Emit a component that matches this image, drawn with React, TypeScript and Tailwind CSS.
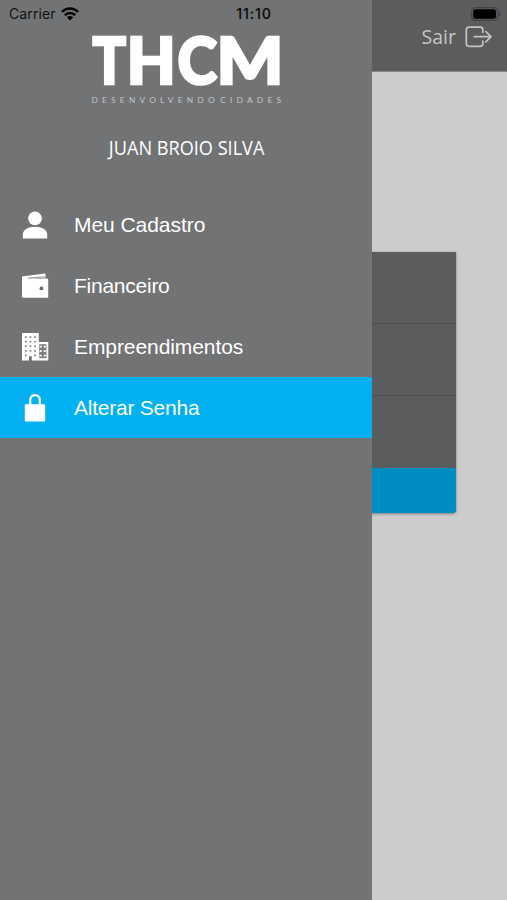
import React from 'react';

const UserIcon = () => (
  <svg width="26" height="28" viewBox="0 0 26 28" fill="#fff">
    <circle cx="13" cy="7.4" r="6.8" />
    <path d="M.8 27.4v-3.6C.8 18.9 5.6 15.8 13 15.8s12.2 3.1 12.2 8v3.6z" />
  </svg>
);

const WalletIcon = () => (
  <svg width="28" height="26" viewBox="0 0 28 26" fill="#fff">
    <path d="M1 3.6 23.6.6q.9 0 .9 1v3.2L6.8 5.6h19.4q1 0 1 1V24q0 .8-1 .8H2q-1 0-1-.8z" />
    <path d="M7 5.1 24.2 3.9" stroke="#727375" strokeWidth=".8" />
    <circle cx="20.4" cy="15.4" r="1.9" fill="#68696b" />
  </svg>
);

const BuildingIcon = () => (
  <svg width="28" height="28" viewBox="0 0 28 28">
    <path fill="#fff" d="M1 0h16.8v9H27.3v18.5H10.8v-4.2H8v4.2H1z" />
    <g fill="#7e7f81">
      {[3.3, 7.8, 12.3, 17].map((y) =>
        [4, 8.6, 13.2].map((x) => <rect key={`${x}-${y}`} x={x} y={y} width="1.7" height="1.7" />)
      )}
      <rect x="4" y="21.6" width="1.7" height="1.7" />
      <rect x="13.2" y="21.6" width="1.7" height="1.7" />
      <rect x="18.2" y="11.2" width="7.2" height="14" />
    </g>
    <g fill="#fff">
      {[12.7, 17.2, 21.7].map((y) =>
        [18.7, 22.7].map((x) => <rect key={`${x}-${y}`} x={x} y={y} width="2" height="1.8" />)
      )}
    </g>
  </svg>
);

const LockIcon = () => (
  <svg width="22" height="28" viewBox="0 0 22 28" fill="none">
    <rect x=".8" y="10.2" width="20.4" height="17.3" rx=".8" fill="#fff" />
    <path d="M6.2 11V6.6C6.2 3.4 8 1.2 11 1.2s4.8 2.2 4.8 5.4V11" stroke="#fff" strokeWidth="2.2" />
  </svg>
);

const ExitIcon = () => (
  <svg width="28" height="22" viewBox="0 0 28 22" fill="none" stroke="#c4c4c4" strokeWidth="1.7" strokeLinecap="round" strokeLinejoin="round">
    <path d="M17.8 6.3V3.6q0-2.5-2.5-2.5H4Q1.3 1.1 1.3 3.8v13.8q0 2.7 2.7 2.7h11.3q2.5 0 2.5-2.5v-2.6" />
    <path d="M9.3 10.7h16.5M20.8 5.5l5.2 5.2-5.2 5.2" />
  </svg>
);

const WifiIcon = () => (
  <svg width="18" height="14" viewBox="0 0 18 14" fill="none" stroke="#050505" strokeWidth="2.4">
    <path d="M.9 5C5.4.4 12.6.4 17.1 5" />
    <path d="M3.8 8.1c2.9-2.9 7.5-2.9 10.4 0" />
    <path d="M5.8 10.3c1.8-1.7 4.6-1.7 6.4 0L9 13.6z" fill="#050505" stroke="none" />
  </svg>
);

const BatteryIcon = () => (
  <svg width="30" height="14" viewBox="0 0 30 14">
    <rect x=".6" y=".6" width="26" height="12.8" rx="4" fill="none" stroke="#434446" strokeWidth="1.2" />
    <rect x="2.2" y="2.2" width="22.8" height="9.6" rx="2.4" fill="#000" />
    <path d="M27.8 4.6q1.8.6 1.8 2.4t-1.8 2.4z" fill="#434446" />
  </svg>
);

const Logo = () => (
  <svg width="194" height="74" viewBox="0 0 194 74" fill="#fff" className="overflow-visible font-['Lato','Liberation_Sans',sans-serif]">
    <g fontSize="64" fontWeight="900" stroke="#fff" strokeWidth="2.6">
      <text x="3.4" y="54" textLength="33.5" lengthAdjust="spacingAndGlyphs">T</text>
      <text x="37.8" y="54" textLength="49" lengthAdjust="spacingAndGlyphs">H</text>
      <text x="88.6" y="54" textLength="39.5" lengthAdjust="spacingAndGlyphs">C</text>
      <text x="127.6" y="54" textLength="67" lengthAdjust="spacingAndGlyphs">M</text>
    </g>
    <text x="2.5" y="72.5" fontSize="8.4" fill="#c3c4c5" textLength="189.5" lengthAdjust="spacing" wordSpacing="-5">
      DESENVOLVENDO CIDADES
    </text>
  </svg>
);

const menuItems = [
  { label: 'Meu Cadastro', tracking: 'tracking-[-0.05px]', icon: <UserIcon /> },
  { label: 'Financeiro', tracking: 'tracking-[-0.25px]', icon: <WalletIcon /> },
  { label: 'Empreendimentos', tracking: 'tracking-[-0.08px]', icon: <BuildingIcon /> },
  { label: 'Alterar Senha', tracking: 'tracking-[-0.23px]', icon: <LockIcon />, active: true },
];

const StatusBar = () => (
  <div className="absolute inset-x-0 top-0 z-20 flex h-[27px] items-center text-[#131314]">
    <div className="flex flex-1 items-center gap-[5px] pl-[9px] font-['Inter','Liberation_Sans',sans-serif] text-[14px] tracking-[0.1px]">
      <span>Carrier</span>
      <WifiIcon />
    </div>
    <span className="pr-[2px] font-['Inter','Liberation_Sans',sans-serif] text-[14px] leading-5 font-semibold tracking-[0.8px]">11:10</span>
    <div className="flex flex-1 justify-end pr-[6px]">
      <BatteryIcon />
    </div>
  </div>
);

const Drawer = () => (
  <aside className="absolute inset-y-0 left-0 z-10 flex w-[372px] flex-col bg-[#727375]">
    <div className="flex h-[194px] flex-col items-center pt-[30px]">
      <Logo />
      <p className="mt-[30px] scale-x-[0.93] pl-px font-['Open_Sans','Noto_Sans',sans-serif] text-[19.5px] leading-7 font-medium whitespace-nowrap text-white">
        JUAN BROIO SILVA
      </p>
    </div>
    <nav>
      {menuItems.map((item) => (
        <a
          key={item.label}
          className={`flex h-[61px] items-center ${item.active ? 'bg-[#00b0f1]' : ''}`}
        >
          <span className="flex w-[70px] justify-center">{item.icon}</span>
          <span className={`pl-1 font-['Liberation_Sans',sans-serif] text-[21px] text-white ${item.tracking}`}>
            {item.label}
          </span>
        </a>
      ))}
    </nav>
  </aside>
);

export default function App() {
  return (
    <div className="relative h-[900px] w-[507px] overflow-hidden bg-[#cccccc]">
      <StatusBar />
      <Drawer />
      <header className="flex h-[72px] justify-end border-b border-[#858687] bg-[#5b5c5e] pt-[22px] pr-[14px]">
        <div className="flex h-[30px] items-center gap-[9px]">
          <span className="font-['Open_Sans','Noto_Sans',sans-serif] text-[19.5px] font-medium text-[#c4c4c4]">Sair</span>
          <ExitIcon />
        </div>
      </header>
      <main className="px-[51px] pt-[180px]">
        <div className="overflow-hidden rounded-b-[4px] bg-[#5b5c5d] shadow-[0_1px_3px_rgba(0,0,0,0.4)]">
          <div className="h-[72px] border-b border-[#505152]" />
          <div className="h-[72px] border-b border-[#505152]" />
          <div className="h-[72px]" />
          <div className="h-[45px] bg-[#008dc2]" />
        </div>
      </main>
    </div>
  );
}
